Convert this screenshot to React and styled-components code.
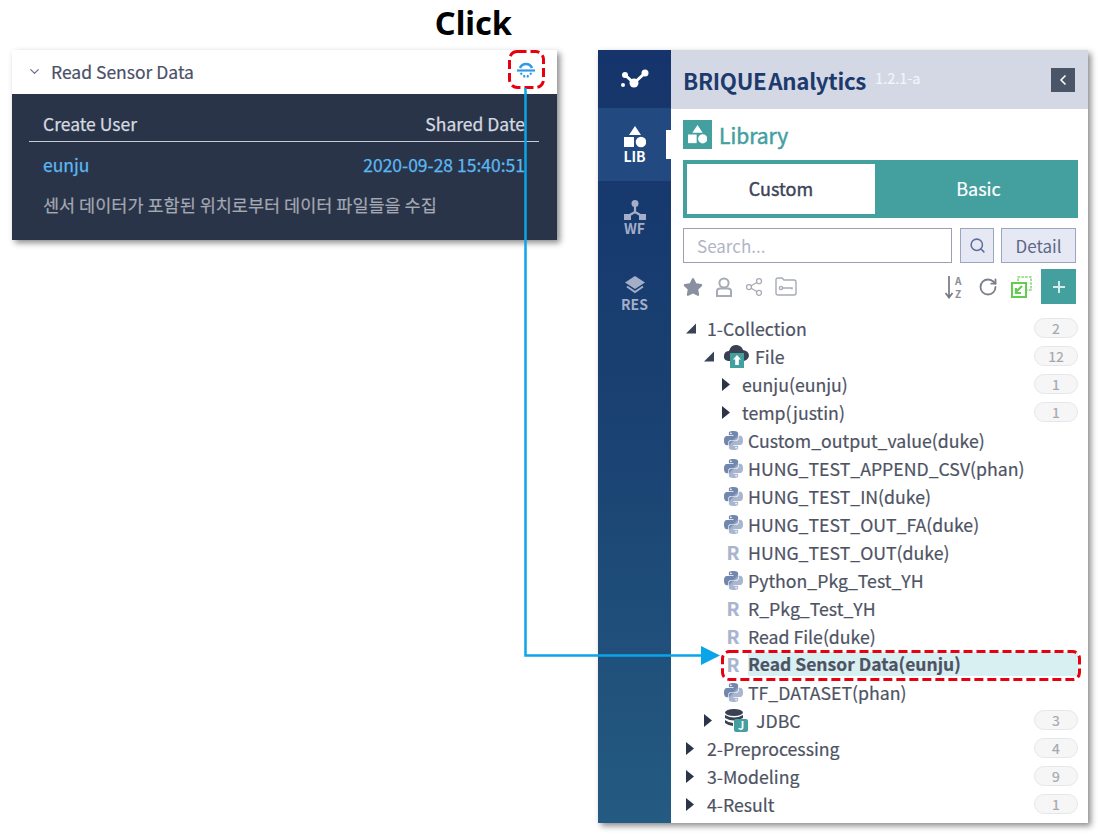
import React from 'react';
import styled, { createGlobalStyle } from 'styled-components';
import { ChevronDown, ChevronLeft, Search, Share2, RotateCw } from 'lucide-react';
import { FaStar } from 'react-icons/fa';
import { SiPython } from 'react-icons/si';

const Global = createGlobalStyle`
    html, body {
        margin: 0;
        background: #fff;
        font-family: "Noto Sans CJK KR", "Noto Sans", sans-serif;
    }
    * { box-sizing: border-box; }
`

const Page = styled.div`
    position: relative;
    width: 1098px;
    height: 836px;
    overflow: hidden;
    display: flex;
    align-items: flex-start;
    gap: 41px;
    padding-left: 12px;
`

const LeftColumn = styled.div`
    width: 545px;
    display: flex;
    flex-direction: column;
`

const ClickLabel = styled.div`
    height: 50px;
    padding: 0 45px 0 0;
    text-align: right;
    font-family: "Noto Sans", sans-serif;
    font-size: 32.5px;
    line-height: 46px;
    font-weight: 700;
    color: #000;
`

const InfoCard = styled.div`
    box-shadow: 3px 3px 6px rgba(0, 0, 0, .45);
`

const InfoHeader = styled.div`
    height: 44px;
    background: #fff;
    display: flex;
    align-items: center;
    padding: 0 22px 2px 15px;
    font-size: 17.5px;
    color: #4a5068;
    -webkit-text-stroke: .2px;
    svg { color: #6c7285; }
`

const InfoTitle = styled.span`
    margin-left: 9px;
    flex: 1;
`

const ClickTarget = styled.div`
    width: 18px;
    height: 18px;
    margin-top: -6px;
`

const InfoBody = styled.div`
    height: 146px;
    background: #2a3449;
    padding: 0 18px 0 17px;
`

const InfoRow = styled.div`
    display: flex;
    justify-content: space-between;
    padding: 0 14px;
    height: ${props => props.$height}px;
    align-items: center;
    font-size: 17.5px;
    -webkit-text-stroke: .25px;
    color: ${props => props.$color};
`

const InfoHead = styled(InfoRow)`
    align-items: flex-end;
    padding-bottom: 5px;
    border-bottom: 1.5px solid #c6ccd8;
`

const Description = styled.div`
    padding: 0 14px;
    height: 38px;
    line-height: 38px;
    font-size: 17.5px;
    -webkit-text-stroke: .2px;
    color: #a3a8b2;
`

const AppPanel = styled.div`
    margin-top: 50px;
    width: 490px;
    height: 773px;
    display: flex;
    box-shadow: 3px 3px 6px rgba(0, 0, 0, .45);
`

const Sidebar = styled.div`
    width: 73px;
    background: linear-gradient(to bottom, #15346b 0%, #1a4272 50%, #245b82 100%);
    display: flex;
    flex-direction: column;
`

const SideLogo = styled.div`
    height: 58px;
    display: flex;
    align-items: center;
    justify-content: center;
`

const SideItem = styled.div`
    position: relative;
    height: 73px;
    padding-top: ${props => props.$offset || 0}px;
    display: flex;
    flex-direction: column;
    align-items: center;
    justify-content: center;
    gap: 1px;
    font-size: 14px;
    line-height: 15px;
    font-weight: 700;
    color: ${props => props.$active ? '#fff' : '#a4aec6'};
    background: ${props => props.$active ? '#234a80' : 'transparent'};
    ${props => props.$active && `
        &::after {
            content: '';
            position: absolute;
            right: 0;
            top: 22px;
            width: 5px;
            height: 29px;
            background: #fff;
        }
    `}
`

const Main = styled.div`
    flex: 1;
    background: #fff;
    display: flex;
    flex-direction: column;
    min-width: 0;
`

const TopBar = styled.div`
    height: 59px;
    background: #d3d8e4;
    display: flex;
    align-items: center;
    padding: 0 13px 0 12px;
`

const Brand = styled.span`
    font-size: 22.3px;
    line-height: 30px;
    font-weight: 700;
    letter-spacing: -.3px;
    color: #1d3a6e;
    word-spacing: -3px;
`

const Version = styled.span`
    margin: -4px 0 0 9px;
    font-size: 14.5px;
    -webkit-text-stroke: .2px;
    color: #f3f5f9;
    flex: 1;
`

const CollapseButton = styled.div`
    width: 24px;
    height: 24px;
    background: #4a5568;
    color: #fff;
    display: flex;
    align-items: center;
    justify-content: center;
`

const Body = styled.div`
    padding: 0 10px 0 12px;
    display: flex;
    flex-direction: column;
`

const LibraryTitle = styled.div`
    margin-top: 11px;
    height: 29px;
    display: flex;
    align-items: center;
    gap: 7px;
    font-size: 21px;
    -webkit-text-stroke: .5px;
    color: #44a09f;
`

const LibraryIcon = styled.div`
    width: 29px;
    height: 29px;
    background: #44a09f;
    display: flex;
    align-items: center;
    justify-content: center;
`

const Tabs = styled.div`
    margin-top: 11px;
    height: 58px;
    border: 4px solid #44a09f;
    display: flex;
`

const Tab = styled.div`
    width: ${props => props.$active ? '188px' : 'auto'};
    flex: ${props => props.$active ? 'none' : 1};
    display: flex;
    align-items: center;
    justify-content: center;
    padding: 0 0 2px ${props => props.$active ? 0 : 8}px;
    font-size: 18px;
    -webkit-text-stroke: ${props => props.$active ? '.4px' : '.2px'};
    color: ${props => props.$active ? '#3d4359' : '#fff'};
    background: ${props => props.$active ? '#fff' : '#44a09f'};
`

const SearchRow = styled.div`
    margin-top: 10px;
    height: 35px;
    display: flex;
`

const SearchBox = styled.div`
    width: 269px;
    border: 1.5px solid #9aa1b3;
    padding: 0 13px;
    font-size: 17px;
    line-height: 33px;
    color: #b0b5c4;
`

const SearchButton = styled.div`
    margin-left: 8px;
    width: 34px;
    border: 1.5px solid #9aa5bf;
    background: #e6e9f3;
    color: #5c6f9c;
    display: flex;
    align-items: center;
    justify-content: center;
`

const DetailButton = styled.div`
    margin-left: 7px;
    width: 75px;
    border: 1.5px solid #9aa5bf;
    background: #e6e9f3;
    color: #5d6788;
    font-size: 17px;
    line-height: 34px;
    text-align: center;
`

const ToolRow = styled.div`
    margin-top: 6px;
    height: 35px;
    width: 393px;
    display: flex;
    align-items: center;
`

const ToolIcon = styled.div`
    display: flex;
    margin-right: ${props => props.$gap}px;
    color: ${props => props.$color || '#a6abb6'};
`

const Spacer = styled.div`
    flex: 1;
`

const AddButton = styled.div`
    width: 35px;
    height: 35px;
    background: #44a09f;
    display: flex;
    align-items: center;
    justify-content: center;
`

const Tree = styled.div`
    margin: 10px -10px 0 -12px;
`

const Row = styled.div`
    height: 28px;
    display: flex;
    align-items: center;
    padding: 0 10px 0 ${props => props.$indent}px;
    font-size: 17.7px;
    -webkit-text-stroke: .2px;
    color: #4e5364;
`

const Caret = styled.div`
    width: ${props => props.$width || 20}px;
    flex: none;
    display: flex;
`

const RowIcon = styled.div`
    width: ${props => props.$width}px;
    flex: none;
    display: flex;
    align-items: center;
    justify-content: center;
`

const RLetter = styled.span`
    font-size: 19px;
    font-weight: 700;
    line-height: 20px;
    color: #a9b5cf;
`

const RowLabel = styled.span`
    margin-left: ${props => props.$gap || 0}px;
    padding-right: 4px;
    white-space: nowrap;
`

const SelectedLabel = styled(RowLabel)`
    flex: 1;
    height: 24px;
    line-height: 24px;
    font-size: 17.5px;
    font-weight: 700;
    background: #d9f0f3;
`

const Badge = styled.span`
    margin-left: auto;
    width: 44px;
    height: 20px;
    border: 1px solid #e6e7ea;
    border-radius: 10px;
    background: #f6f6f7;
    color: #a4a7ae;
    font-size: 14px;
    line-height: 18px;
    text-align: center;
`

const Overlay = styled.svg`
    position: absolute;
    left: 0;
    top: 0;
    pointer-events: none;
`

const CaretIcon = ({ open }) => (
    <svg width="11" height="13" viewBox="0 0 11 13">
        {open
            ? <path d="M0 11.5 L10 11.5 L10 1.5 Z" fill="#3a4256" />
            : <path d="M0 0 L8 6.5 L0 13 Z" fill="#2c3448" />}
    </svg>
)

const LogoIcon = () => (
    <svg width="30" height="22" viewBox="0 0 30 22" fill="#fff">
        <path d="M5 7 L14 15 L25 5" stroke="#fff" strokeWidth="3" fill="none" />
        <circle cx="5" cy="7" r="3" />
        <circle cx="3" cy="17" r="2" />
        <circle cx="14" cy="15" r="4.5" />
        <circle cx="25" cy="5" r="3.5" />
    </svg>
)

const ShapesIcon = ({ size = 22, fill = '#fff' }) => (
    <svg width={size} height={size} viewBox="0 0 22 22" fill={fill}>
        <path d="M11 0 L17 9 L5 9 Z" />
        <rect x="0" y="11" width="10" height="10" />
        <circle cx="17" cy="16" r="5.3" />
    </svg>
)

const FlowIcon = () => (
    <svg width="22" height="20" viewBox="0 0 22 20" fill="#a4aec6">
        <circle cx="11" cy="3.5" r="3.5" />
        <path d="M11 5 V12 M11 12 L4 16 M11 12 L18 16" stroke="#a4aec6" strokeWidth="2.2" fill="none" />
        <rect x="0" y="14" width="7" height="6" />
        <rect x="15" y="14" width="7" height="6" />
    </svg>
)

const LayersIcon = () => (
    <svg width="20" height="20" viewBox="0 0 20 20">
        <path d="M10 0 L20 6.5 L10 13 L0 6.5 Z" fill="#a4aec6" />
        <path d="M2 10.5 L10 16 L18 10.5" stroke="#a4aec6" strokeWidth="2" fill="none" />
    </svg>
)

const SensorIcon = () => (
    <svg width="18" height="18" viewBox="0 0 18 18" fill="none" stroke="#2f9be8">
        <path d="M3 7 A6.5 6.5 0 0 1 15 7" strokeWidth="2.6" />
        <path d="M0 9.5 H18" strokeWidth="2.2" />
        <path d="M3.5 12 L5 13.5 M7 14 L7.5 16.5 M11 14 L10.5 16.5 M14.5 12 L13 13.5" strokeWidth="2" />
    </svg>
)

const UserIcon = () => (
    <svg width="18" height="20" viewBox="0 0 18 20" fill="none" stroke="#a6abb6" strokeWidth="2">
        <circle cx="9" cy="6" r="4.6" />
        <path d="M2 19 V14 Q2 11.5 5 11.5 H13 Q16 11.5 16 14 V19 Z" />
    </svg>
)

const KeyFolderIcon = () => (
    <svg width="22" height="19" viewBox="0 0 22 19" fill="none" stroke="#a6abb6" strokeWidth="1.4">
        <path d="M1 3 Q1 1 3 1 H7 L9 3 H19 Q21 3 21 5 V16 Q21 18 19 18 H3 Q1 18 1 16 Z" />
        <circle cx="6" cy="11" r="1.6" />
        <path d="M8 11 H17 V12.5" />
    </svg>
)

const SortIcon = () => (
    <svg width="22" height="26" viewBox="0 0 22 26">
        <path d="M5 2 V23 M1.5 19 L5 23.5 L8.5 19" stroke="#737884" strokeWidth="1.7" fill="none" />
        <text x="11" y="11" fontSize="10" fontWeight="700" fill="#8a8e98">A</text>
        <text x="11" y="24" fontSize="10" fontWeight="700" fill="#8a8e98">Z</text>
    </svg>
)

const CopyIcon = () => (
    <svg width="21" height="22" viewBox="0 0 21 22" fill="none">
        <path d="M7 5 V1 H20 V14 H16" stroke="#7fd86c" strokeWidth="1.5" strokeDasharray="2.5 1.2" />
        <rect x="1" y="7" width="14" height="14" stroke="#62cc50" strokeWidth="2" />
        <path d="M11 10 L5 16 M5 12 V17 H10" stroke="#62cc50" strokeWidth="2.2" />
    </svg>
)

const CloudIcon = () => (
    <svg width="25" height="24" viewBox="0 0 25 24">
        <path d="M4 17 Q-1 16 0 11 Q1 7 5 7 Q7 0 13 1 Q18 2 19 6 Q25 7 25 12 Q24 16 20 17 Z" fill="#3a4152" />
        <rect x="6" y="9" width="14" height="15" fill="#44a09f" />
        <path d="M13 11 L17 15.5 H14.8 V21 H11.2 V15.5 H9 Z" fill="#fff" />
    </svg>
)

const DatabaseIcon = () => (
    <svg width="23" height="23" viewBox="0 0 23 23">
        <ellipse cx="9" cy="3.5" rx="9" ry="3.5" fill="#3a4152" />
        <path d="M0 6 Q9 11 18 6 V9 Q9 14 0 9 Z M0 11 Q4 14 8 14 V17 Q4 17 0 14 Z" fill="#3a4152" />
        <rect x="9" y="10" width="14" height="13" rx="2" fill="#44a09f" />
        <text x="13" y="21" fontSize="11" fontWeight="700" fill="#fff">J</text>
    </svg>
)

const leafIcon = kind => kind === 'r' ? <RLetter>R</RLetter> : <SiPython size={19} fill="url(#pythonFill)" />

const leaves = [
    { kind: 'py', label: 'Custom_output_value(duke)' },
    { kind: 'py', label: 'HUNG_TEST_APPEND_CSV(phan)' },
    { kind: 'py', label: 'HUNG_TEST_IN(duke)' },
    { kind: 'py', label: 'HUNG_TEST_OUT_FA(duke)' },
    { kind: 'r', label: 'HUNG_TEST_OUT(duke)' },
    { kind: 'py', label: 'Python_Pkg_Test_YH' },
    { kind: 'r', label: 'R_Pkg_Test_YH' },
    { kind: 'r', label: 'Read File(duke)' },
    { kind: 'r', label: 'Read Sensor Data(eunju)', selected: true },
    { kind: 'py', label: 'TF_DATASET(phan)' },
]

const LeafRow = ({ kind, label, selected }) => {
    const Label = selected ? SelectedLabel : RowLabel
    return (
        <Row $indent={52}>
            <RowIcon $width={20}>{leafIcon(kind)}</RowIcon>
            <Label $gap={5}>{label}</Label>
        </Row>
    )
}

const App = () => (
    <Page>
        <Global />
        <LeftColumn>
            <ClickLabel>Click</ClickLabel>
            <InfoCard>
                <InfoHeader>
                    <ChevronDown size={15} />
                    <InfoTitle>Read Sensor Data</InfoTitle>
                    <ClickTarget><SensorIcon /></ClickTarget>
                </InfoHeader>
                <InfoBody>
                    <InfoHead $height={48} $color="#d6d9e0">
                        <span>Create User</span>
                        <span>Shared Date</span>
                    </InfoHead>
                    <InfoRow $height={44} $color="#5bb8f2">
                        <span>eunju</span>
                        <span>2020-09-28 15:40:51</span>
                    </InfoRow>
                    <Description>센서 데이터가 포함된 위치로부터 데이터 파일들을 수집</Description>
                </InfoBody>
            </InfoCard>
        </LeftColumn>
        <AppPanel>
            <Sidebar>
                <SideLogo><LogoIcon /></SideLogo>
                <SideItem $active><ShapesIcon size={22} />LIB</SideItem>
                <SideItem><FlowIcon />WF</SideItem>
                <SideItem $offset={6}><LayersIcon />RES</SideItem>
            </Sidebar>
            <Main>
                <TopBar>
                    <Brand>BRIQUE Analytics</Brand>
                    <Version>1.2.1-a</Version>
                    <CollapseButton><ChevronLeft size={16} strokeWidth={2.5} /></CollapseButton>
                </TopBar>
                <Body>
                    <LibraryTitle>
                        <LibraryIcon><ShapesIcon size={19} /></LibraryIcon>
                        Library
                    </LibraryTitle>
                    <Tabs>
                        <Tab $active>Custom</Tab>
                        <Tab>Basic</Tab>
                    </Tabs>
                    <SearchRow>
                        <SearchBox>Search...</SearchBox>
                        <SearchButton><Search size={17} strokeWidth={2.2} /></SearchButton>
                        <DetailButton>Detail</DetailButton>
                    </SearchRow>
                    <ToolRow>
                        <ToolIcon $gap={12} $color="#8a90a0"><FaStar size={20} /></ToolIcon>
                        <ToolIcon $gap={11}><UserIcon /></ToolIcon>
                        <ToolIcon $gap={11}><Share2 size={20} strokeWidth={1.5} /></ToolIcon>
                        <ToolIcon $gap={0}><KeyFolderIcon /></ToolIcon>
                        <Spacer />
                        <ToolIcon $gap={12}><SortIcon /></ToolIcon>
                        <ToolIcon $gap={13} $color="#7a7f8a"><RotateCw size={20} strokeWidth={2.2} /></ToolIcon>
                        <ToolIcon $gap={9}><CopyIcon /></ToolIcon>
                        <AddButton>
                            <svg width="12" height="12" viewBox="0 0 12 12"><path d="M6 0 V12 M0 6 H12" stroke="#d5ecec" strokeWidth="2" /></svg>
                        </AddButton>
                    </ToolRow>
                    <Tree>
                        <Row $indent={15}>
                            <Caret $width={21}><CaretIcon open /></Caret>
                            <RowLabel>1-Collection</RowLabel>
                            <Badge>2</Badge>
                        </Row>
                        <Row $indent={33}>
                            <Caret><CaretIcon open /></Caret>
                            <RowIcon $width={25}><CloudIcon /></RowIcon>
                            <RowLabel $gap={6}>File</RowLabel>
                            <Badge>12</Badge>
                        </Row>
                        <Row $indent={51}>
                            <Caret><CaretIcon /></Caret>
                            <RowLabel>eunju(eunju)</RowLabel>
                            <Badge>1</Badge>
                        </Row>
                        <Row $indent={51}>
                            <Caret><CaretIcon /></Caret>
                            <RowLabel>temp(justin)</RowLabel>
                            <Badge>1</Badge>
                        </Row>
                        {leaves.map(leaf => <LeafRow key={leaf.label} {...leaf} />)}
                        <Row $indent={33}>
                            <Caret><CaretIcon /></Caret>
                            <RowIcon $width={25}><DatabaseIcon /></RowIcon>
                            <RowLabel $gap={7}>JDBC</RowLabel>
                            <Badge>3</Badge>
                        </Row>
                        <Row $indent={15}>
                            <Caret $width={21}><CaretIcon /></Caret>
                            <RowLabel>2-Preprocessing</RowLabel>
                            <Badge>4</Badge>
                        </Row>
                        <Row $indent={15}>
                            <Caret $width={21}><CaretIcon /></Caret>
                            <RowLabel>3-Modeling</RowLabel>
                            <Badge>9</Badge>
                        </Row>
                        <Row $indent={15}>
                            <Caret $width={21}><CaretIcon /></Caret>
                            <RowLabel>4-Result</RowLabel>
                            <Badge>1</Badge>
                        </Row>
                    </Tree>
                </Body>
            </Main>
        </AppPanel>
        <Overlay width="1098" height="836" viewBox="0 0 1098 836">
            <defs>
                <linearGradient id="pythonFill" x1="0" y1="0" x2="1" y2="1">
                    <stop offset="0.45" stopColor="#7187ad" />
                    <stop offset="0.55" stopColor="#a9b6cf" />
                </linearGradient>
            </defs>
            <rect x="509.5" y="51.5" width="34" height="36" rx="8" fill="none" stroke="#e60010" strokeWidth="3" strokeDasharray="9 4" />
            <rect x="722.5" y="651.5" width="357" height="28" rx="7" fill="none" stroke="#e60010" strokeWidth="3" strokeDasharray="9 4" />
            <path d="M525.5 88 V655.5 H706" stroke="#0aa5e8" strokeWidth="2.5" fill="none" />
            <path d="M701 646 L720 655.5 L701 665 Z" fill="#0aa5e8" />
        </Overlay>
    </Page>
)

export default App;
